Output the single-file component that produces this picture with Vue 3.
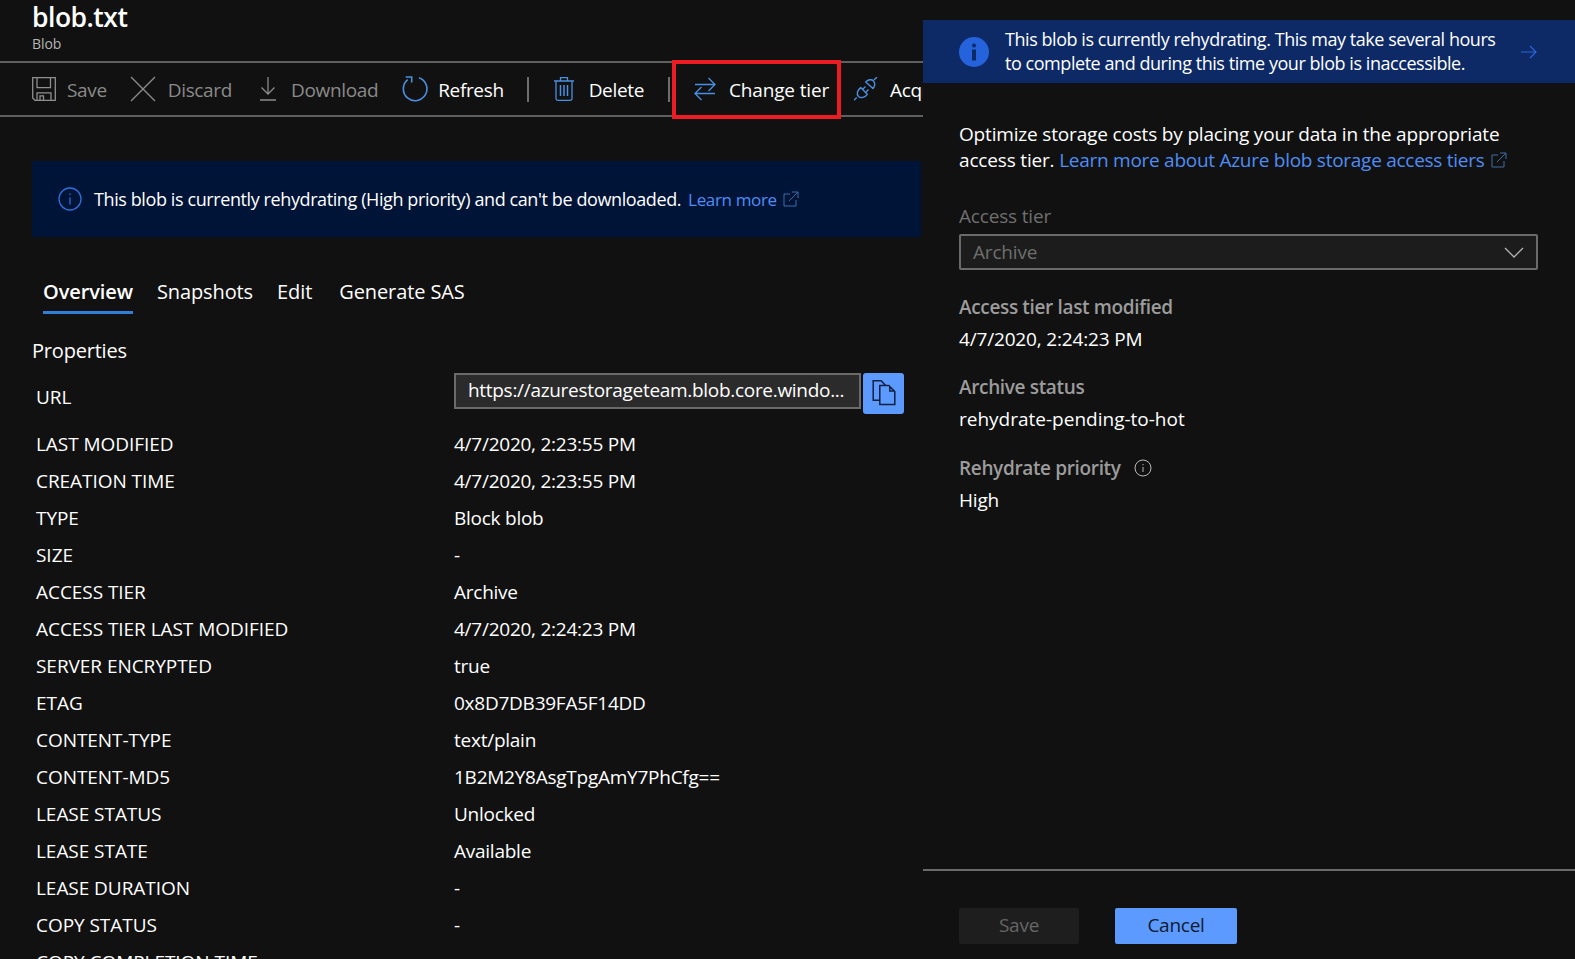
<script setup>
const rows = [
  ['LAST MODIFIED', '4/7/2020, 2:23:55 PM'],
  ['CREATION TIME', '4/7/2020, 2:23:55 PM'],
  ['TYPE', 'Block blob'],
  ['SIZE', '-'],
  ['ACCESS TIER', 'Archive'],
  ['ACCESS TIER LAST MODIFIED', '4/7/2020, 2:24:23 PM'],
  ['SERVER ENCRYPTED', 'true'],
  ['ETAG', '0x8D7DB39FA5F14DD'],
  ['CONTENT-TYPE', 'text/plain'],
  ['CONTENT-MD5', '1B2M2Y8AsgTpgAmY7PhCfg=='],
  ['LEASE STATUS', 'Unlocked'],
  ['LEASE STATE', 'Available'],
  ['LEASE DURATION', '-'],
  ['COPY STATUS', '-'],
  ['COPY COMPLETION TIME', '-']
]
const tabs = ['Overview', 'Snapshots', 'Edit', 'Generate SAS']
</script>

<template>
  <div class="page">
    <section class="main">
      <header class="head">
        <h1>blob.txt</h1>
        <div class="sub">Blob</div>
      </header>

      <div class="toolbar">
        <div class="tool off save">
          <svg width="24" height="24" viewBox="0 0 24 24" fill="none" stroke="#8f8f8f" stroke-width="1.3">
            <path d="M.7.7H23.300V23.300H3L.7 21z" />
            <path d="M5 .7v10h13.500V.7M5 23.300v-7.500h14v7.500M8 23.300v-4.500h3.500v4.500" />
          </svg>
          <span>Save</span>
        </div>
        <div class="tool off discard">
          <svg width="26" height="26" viewBox="0 0 26 26" fill="none" stroke="#8a8a8a" stroke-width="1.4">
            <path d="M1 1l24 24M25 1L1 25" />
          </svg>
          <span>Discard</span>
        </div>
        <div class="tool off download">
          <svg width="16" height="24" viewBox="0 0 16 24" fill="none" stroke="#8a8a8a" stroke-width="1.3">
            <path d="M8 0v17M1.500 10.500L8 17l6.500-6.500M0 23h16" />
          </svg>
          <span>Download</span>
        </div>
        <div class="tool refresh">
          <svg width="26" height="26" viewBox="0 0 26 26" fill="none" stroke="#4a90e2" stroke-width="1.6">
            <path d="M5.700 3.700A11.800 11.800 0 1 0 17 1.700" />
            <path d="M3.700 1H9.700V6.500" />
          </svg>
          <span>Refresh</span>
        </div>
        <i class="sep"></i>
        <div class="tool delete">
          <svg width="20" height="24" viewBox="0 0 20 24" fill="none" stroke="#4a90e2" stroke-width="1.3">
            <path d="M0 4h20M6.500 4V.7h7V4M2 4v17.500a1.800 1.800 0 0 0 1.800 1.800h12.400a1.800 1.800 0 0 0 1.800-1.800V4" />
            <path d="M6.500 8v11M10 8v11M13.500 8v11" stroke-width="1.500" />
          </svg>
          <span>Delete</span>
        </div>
        <i class="sep"></i>
        <div class="tool tier">
          <svg width="22" height="24" viewBox="0 0 22 24" fill="none" stroke="#4a90e2" stroke-width="1.3">
            <path d="M1 7.500h20M14.500 1L21 7.500 14.500 14M21 16.500H1M7.500 10L1 16.500 7.500 23" />
          </svg>
          <span>Change tier</span>
        </div>
        <div class="tool acquire">
          <svg width="24" height="24" viewBox="0 0 24 24" fill="none" stroke="#4a90e2" stroke-width="1.4">
            <path d="M6.700 10.600L13.300 17.300C11 20.500 7 21.500 4.500 19.500 2 17 3.500 13 6.700 10.600z" />
            <path d="M11.700 5L19 11.600C21 9.500 21.500 6 19.500 4 17.500 2 14 2.500 11.700 5z" />
            <path d="M8.500 12.500l3-3M11.500 15.500l3-3M2.700 20.600L0 23.300M20 3l3-3" />
          </svg>
          <span>Acquire lease</span>
        </div>
      </div>

      <div class="notice">
        <svg width="24" height="24" viewBox="0 0 24 24" fill="none" stroke="#2f6fd8" stroke-width="1.300">
          <circle cx="12" cy="12" r="11" />
          <path d="M12 10.500v7M12 6.500v1.500" />
        </svg>
        <span class="notice-text">This blob is currently rehydrating (High priority) and can't be downloaded.</span>
        <a class="link">Learn more</a>
        <svg class="ext" width="16" height="16" viewBox="0 0 16 16" fill="none" stroke="#3a6ea8" stroke-width="1">
          <path d="M7 3H1v12h12V9M9 1h6v6M15 1L6 10" />
        </svg>
      </div>

      <nav class="tabs">
        <a v-for="(t, i) in tabs" :key="t" class="tab" :class="{ active: i === 0 }">{{ t }}</a>
      </nav>

      <h2 class="props-title">Properties</h2>

      <div class="url-row">
        <span class="key">URL</span>
        <div class="url-field">
          <div class="url-input">https://azurestorageteam.blob.core.windo...</div>
          <button class="copy">
            <svg width="24" height="26" viewBox="0 0 24 26" fill="none" stroke="#10213f" stroke-width="1.500">
              <path d="M7.800 20.200H1.200V.7h8l4.300 4.800" />
              <path d="M7.800 5.500h9l6 6v13H7.800zM17.800 6.500v4.500h4.500" />
            </svg>
          </button>
        </div>
      </div>

      <div v-for="r in rows" :key="r[0]" class="row">
        <span class="key">{{ r[0] }}</span>
        <span class="val">{{ r[1] }}</span>
      </div>
    </section>

    <aside class="panel">
      <div class="banner">
        <svg class="banner-icon" width="30" height="30" viewBox="0 0 30 30">
          <circle cx="15" cy="15" r="15" fill="#2563dc" />
          <rect x="13" y="12.500" width="4" height="11" fill="#0d2a66" />
          <rect x="13" y="6.500" width="4" height="4" rx="2" fill="#0d2a66" />
        </svg>
        <p>This blob is currently rehydrating. This may take several hours to complete and during this time your blob is inaccessible.</p>
        <svg class="banner-arrow" width="16" height="14" viewBox="0 0 16 14" fill="none" stroke="#2a66d8" stroke-width="1.200">
          <path d="M0 7h15M9 1l6 6-6 6" />
        </svg>
      </div>

      <div class="panel-body">
        <p class="intro">
          Optimize storage costs by placing your data in the appropriate access tier.
          <a class="link">Learn more about Azure blob storage access tiers</a>
          <svg class="ext" width="16" height="16" viewBox="0 0 16 16" fill="none" stroke="#3a6ea8" stroke-width="1">
            <path d="M7 3H1v12h12V9M9 1h6v6M15 1L6 10" />
          </svg>
        </p>

        <label class="tier-label">Access tier</label>
        <div class="select">
          <span>Archive</span>
          <svg width="20" height="11" viewBox="0 0 20 11" fill="none" stroke="#b5b5b5" stroke-width="1.300">
            <path d="M1 1l9 9 9-9" />
          </svg>
        </div>

        <div class="field first">
          <div class="label">Access tier last modified</div>
          <div class="value">4/7/2020, 2:24:23 PM</div>
        </div>
        <div class="field second">
          <div class="label">Archive status</div>
          <div class="value wide">rehydrate-pending-to-hot</div>
        </div>
        <div class="field">
          <div class="label">
            Rehydrate priority
            <svg width="18" height="18" viewBox="0 0 18 18" fill="none" stroke="#b8b8b8" stroke-width="1">
              <circle cx="9" cy="9" r="8" />
              <path d="M9 8v5M9 5v1.300" />
            </svg>
          </div>
          <div class="value">High</div>
        </div>
      </div>

      <footer class="panel-foot">
        <button class="btn disabled">Save</button>
        <button class="btn primary">Cancel</button>
      </footer>
    </aside>

    <div class="highlight"></div>
  </div>
</template>

<style>
html, body {
  margin: 0;
  background: #111;
}
</style>

<style scoped>
.page {
  position: relative;
  display: flex;
  width: 1575px;
  height: 959px;
  overflow: hidden;
  background: #111;
  color: #fff;
  font-family: "Open Sans", "Noto Sans", sans-serif;
  font-size: 19px;
  letter-spacing: -0.25px;
}
.main {
  width: 923px;
  flex: none;
  overflow: hidden;
}
.head {
  height: 61px;
  padding-left: 32px;
  box-sizing: border-box;
}
h1 {
  margin: 0;
  font-size: 26.5px;
  line-height: 35px;
  font-weight: 600;
  letter-spacing: -0.5px;
}
.sub {
  font-size: 14px;
  line-height: 18px;
  color: #b5b5b5;
  letter-spacing: -0.1px;
}
.toolbar {
  display: flex;
  align-items: center;
  height: 56px;
  padding-left: 32px;
  border-top: 2px solid #5f5f5f;
  border-bottom: 2px solid #5f5f5f;
  box-sizing: border-box;
  white-space: nowrap;
  letter-spacing: -0.35px;
}
.tool {
  display: flex;
  align-items: center;
  flex: none;
}
.tool.off {
  color: #8a8a8a;
}
.tool span {
  margin-left: 12px;
  padding-top: 2px;
}
.save span { margin-left: 11px; }
.discard { margin-left: 23px; }
.download { margin-left: 28px; }
.download span { margin-left: 15px; }
.refresh { margin-left: 24px; }
.refresh span { margin-left: 10px; }
.sep {
  flex: none;
  width: 2px;
  height: 25px;
  margin-left: 23px;
  background: #6d6d6d;
}
.delete { margin-left: 25px; }
.delete span { margin-left: 15px; }
.delete + .sep { margin-left: 24px; }
.tier { margin-left: 24px; }
.tier span {
  margin-left: 13px;
  letter-spacing: -0.15px;
}
.acquire { margin-left: 25px; }
.notice {
  display: flex;
  align-items: center;
  height: 76px;
  margin: 44px 2px 0 32px;
  padding-left: 26px;
  background: #001437;
  white-space: nowrap;
  font-size: 18px;
  letter-spacing: -0.4px;
}
.notice-text {
  margin-left: 12px;
}
.link {
  color: #4f8df5;
}
.notice .link {
  margin-left: 7px;
  font-size: 17px;
  letter-spacing: -0.35px;
}
.ext {
  margin-left: 6px;
  vertical-align: -1px;
}
.tabs {
  display: flex;
  margin: 37px 0 0 43px;
  gap: 24px;
}
.tab {
  height: 40px;
  line-height: 35px;
  font-size: 20px;
  box-sizing: border-box;
  letter-spacing: -0.1px;
}
.tab:last-child {
  margin-left: 3px;
}
.tab.active {
  font-weight: 600;
  border-bottom: 3px solid #2f7ed8;
}
.props-title {
  margin: 20px 0 0 32px;
  font-size: 20px;
  font-weight: 400;
  line-height: 34px;
  letter-spacing: -0.2px;
}
.url-row {
  display: grid;
  grid-template-columns: 418px 1fr;
  align-items: center;
  margin: 0 0 0 36px;
  height: 58px;
}
.url-field {
  display: flex;
  margin-top: -8px;
}
.url-input {
  width: 407px;
  height: 36px;
  box-sizing: border-box;
  border: 2px solid #6a6a6a;
  background: #2b2b2b;
  padding-left: 12px;
  line-height: 31px;
  white-space: nowrap;
  overflow: hidden;
  letter-spacing: -0.3px;
}
.copy {
  width: 41px;
  height: 41px;
  margin-left: 2px;
  padding: 0;
  border: 0;
  border-radius: 3px;
  background: #5c9aff;
  display: flex;
  align-items: center;
  justify-content: center;
}
.row {
  display: grid;
  grid-template-columns: 418px 1fr;
  margin-left: 36px;
  height: 37px;
  line-height: 37px;
  white-space: nowrap;
}
.key {
  letter-spacing: -0.05px;
}
.panel {
  position: relative;
  display: flex;
  flex-direction: column;
  flex: 1;
  background: #111;
}
.banner {
  display: flex;
  align-items: center;
  height: 63px;
  margin-top: 20px;
  flex: none;
  padding-left: 36px;
  background: #0d2a66;
  font-size: 18px;
  letter-spacing: -0.45px;
}
.banner p {
  margin: -1px 0 0 16px;
  width: 500px;
  line-height: 24px;
}
.banner-arrow {
  margin-left: 16px;
}
.panel-body {
  flex: 1;
  padding: 0 37px 0 36px;
  letter-spacing: -0.17px;
}
.intro {
  margin: 38px 0 0;
  line-height: 26px;
  width: 570px;
}
.intro .link {
  letter-spacing: -0.27px;
}
.tier-label {
  display: block;
  margin-top: 30px;
  color: #6f6f6f;
  line-height: 26px;
}
.select {
  display: flex;
  align-items: center;
  justify-content: space-between;
  height: 36px;
  margin-top: 5px;
  box-sizing: border-box;
  padding: 0 12px;
  border: 2px solid #6a6a6a;
  border-radius: 2px;
  background: #1c1c1c;
  color: #6f6f6f;
}
.field {
  margin-top: 23px;
}
.field.first {
  margin-top: 24px;
}
.field.second {
  margin-top: 22px;
}
.label {
  display: flex;
  align-items: center;
  gap: 13px;
  line-height: 26px;
  color: #9c9c9c;
  font-weight: 600;
  letter-spacing: -0.35px;
}
.value {
  margin-top: 6px;
  line-height: 26px;
}
.value.wide {
  letter-spacing: 0;
}
.panel-foot {
  flex: none;
  display: flex;
  gap: 36px;
  height: 90px;
  padding: 37px 0 0 36px;
  box-sizing: border-box;
  border-top: 2px solid #6a6a6a;
}
.btn {
  height: 36px;
  padding: 0 0 2px;
  border: 0;
  border-radius: 2px;
  font: inherit;
  letter-spacing: inherit;
}
.btn.disabled {
  width: 120px;
  background: #1e1e1e;
  color: #666;
}
.btn.primary {
  width: 122px;
  background: #5c9aff;
  color: #0f1a2e;
}
.highlight {
  position: absolute;
  left: 672px;
  top: 60px;
  width: 169px;
  height: 59px;
  box-sizing: border-box;
  border: 4px solid #ed1c24;
}
</style>
